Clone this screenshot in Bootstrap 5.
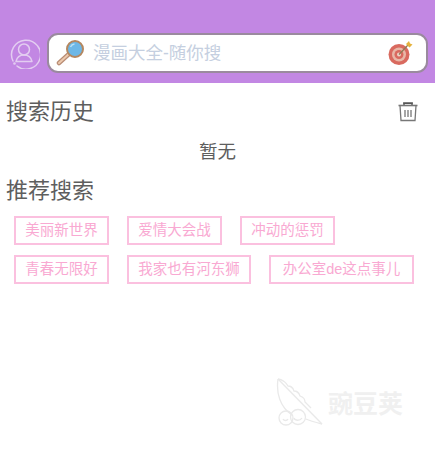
<!DOCTYPE html>
<html lang="zh">
<head>
  <meta charset="UTF-8">
  <meta name="viewport" content="width=device-width, initial-scale=1.0">
  <title>搜索</title>
  <link rel="stylesheet" href="https://cdn.jsdelivr.net/npm/bootstrap@5.3.2/dist/css/bootstrap.min.css">
  <style>
    body { font-family: "Liberation Sans", "Noto Sans CJK SC", sans-serif; background: #fff; height: 451px; overflow: hidden; position: relative; }
    .top-bar { background: #c287e3; height: 83px; padding: 33px 7px 0 8px; gap: 7px; }
    .user-btn { width: 32px; height: 40px; flex: none; }
    .search-box { flex: 1; height: 40px; background: #fff; border: 2px solid #9a8a9e; border-radius: 11px; padding: 0 13px 0 7px; }
    .search-hint { color: #c5cfe0; font-size: 17.5px; margin-left: 7px; flex: 1; }
    .sec-title { color: #5e5e5e; font-size: 22px; line-height: 24px; margin: 0; font-weight: 400; }
    .history-head { padding: 17px 17px 0 6px; }
    .empty-note { color: #5e5e5e; font-size: 18.5px; line-height: 20px; text-align: center; padding-top: 18px; }
    .rec-title { padding: 17px 0 0 6px; }
    .tag-list { padding: 13px 0 0 14px; row-gap: 10px; }
    .tag-row { display: flex; }
    .tag-item { height: 29px; border: 2px solid #fbc0df; color: #f9a9d2; font-size: 14.5px; display: flex; align-items: center; justify-content: center; white-space: nowrap; }
    .tag-sm { width: 95px; margin-right: 18px; }
    .tag-md { width: 124px; margin-right: 18px; }
    .tag-lg { width: 145px; }
    .watermark { position: absolute; left: 276px; top: 377px; gap: 2px; }
    .watermark span { color: #f0f0f0; font-size: 25px; font-weight: 700; margin-top: 12px; line-height: 30px; }
  </style>
</head>
<body>
  <div class="top-bar d-flex">
    <div class="user-btn d-flex align-items-center justify-content-center">
      <svg width="32" height="32" viewBox="0 0 32 32" fill="none" stroke="#e3cdf1" stroke-width="1.5">
        <path d="M5 24A14.500 14.500 0 1 1 9 29" stroke-linecap="round"/>
        <circle cx="6.500" cy="26.500" r=".6" fill="#e3cdf1"/>
        <circle cx="16" cy="12.500" r="5.500"/>
        <path d="M8 24.500c1-4.500 4-6.500 8-6.500s7 2 8 6.500z" stroke-linejoin="round"/>
      </svg>
    </div>
    <div class="search-box d-flex align-items-center">
      <svg width="30" height="26" viewBox="0 0 30 26" class="flex-shrink-0">
        <path d="M3 23 14 13" stroke="#b98d75" stroke-width="4.500" stroke-linecap="round"/>
        <path d="M3 23 14 13" stroke="#ecc9ae" stroke-width="2" stroke-linecap="round"/>
        <circle cx="19" cy="9" r="8" fill="#6db7e6" stroke="#b5875f" stroke-width="2"/>
        <path d="M14.500 7a5 5 0 0 1 4-3" stroke="#b8e0f6" stroke-width="1.500" fill="none"/>
      </svg>
      <span class="search-hint">漫画大全-随你搜</span>
      <svg width="26" height="26" viewBox="0 0 26 26" class="flex-shrink-0">
        <circle cx="12" cy="14.500" r="10.500" fill="#d96a5f"/>
        <circle cx="12" cy="14.500" r="7" fill="#e8b8a8"/>
        <circle cx="12" cy="14.500" r="4.500" fill="#d96a5f"/>
        <circle cx="12" cy="14.500" r="2" fill="#efd5c8"/>
        <path d="M12 14.500 21 5" stroke="#8f7a55" stroke-width="1.200"/>
        <path d="M19 4l3-3 1 2.500 2.500 1-3 3z" fill="#e5b23c"/>
      </svg>
    </div>
  </div>

  <div class="history-head d-flex justify-content-between align-items-center">
    <h2 class="sec-title">搜索历史</h2>
    <svg width="20" height="20" viewBox="0 0 20 20" fill="none" stroke="#777" stroke-width="1.300">
      <path d="M.5 3.500h19" stroke-width="1.600"/>
      <path d="M6 2.800V1.200h8v1.600" stroke-width="1.800" stroke="#555"/>
      <path d="M2 3.500 3 18.500h14l1-15"/>
      <path d="M7 8v7M10 8v7M13 8v7"/>
    </svg>
  </div>
  <div class="empty-note">暂无</div>

  <h2 class="sec-title rec-title">推荐搜索</h2>
  <div class="tag-list d-flex flex-column">
    <div class="tag-row">
      <div class="tag-item tag-sm">美丽新世界</div>
      <div class="tag-item tag-sm">爱情大会战</div>
      <div class="tag-item tag-sm me-0">冲动的惩罚</div>
    </div>
    <div class="tag-row">
      <div class="tag-item tag-sm">青春无限好</div>
      <div class="tag-item tag-md">我家也有河东狮</div>
      <div class="tag-item tag-lg">办公室de这点事儿</div>
    </div>
  </div>

  <div class="watermark d-flex">
    <svg width="50" height="50" viewBox="0 0 50 50" fill="none" stroke="#e9e9e9" stroke-width="1.300">
      <path d="M2 2 46 47"/>
      <path d="M2 2C0 16 4 30 16 38"/>
      <path d="M2 2C8 3 10 6 12 9c3 0 5 2 6 5 3 0 5 2 6 5 3 1 5 3 5 6l6 6"/>
      <circle cx="10" cy="41" r="7"/>
      <circle cx="22" cy="40" r="7.500"/>
      <path d="M7 42c1 2 4 2 5 0M18 41c1 3 6 3 8 0"/>
      <path d="M30 42c4 2 8 3 16 5"/>
    </svg>
    <span>豌豆荚</span>
  </div>

  <script src="https://cdn.jsdelivr.net/npm/bootstrap@5.3.2/dist/js/bootstrap.bundle.min.js"></script>
</body>
</html>
